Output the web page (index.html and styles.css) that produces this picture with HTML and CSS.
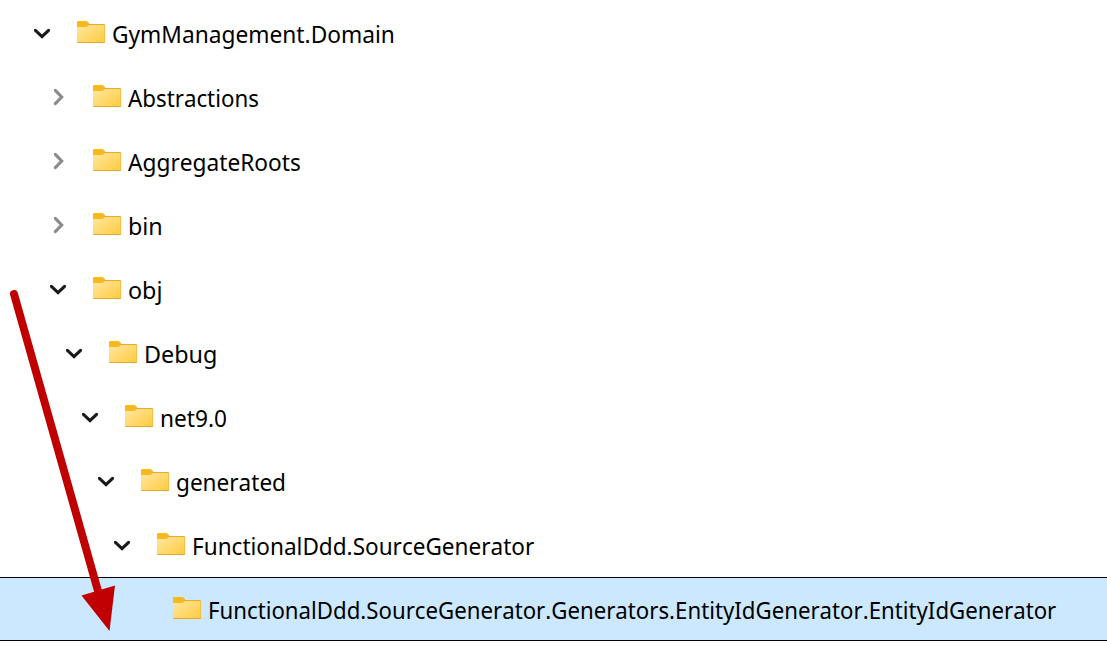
FILE: index.html
```html
<!DOCTYPE html>
<html lang="en"><head><meta charset="utf-8"><title>Folders</title><link rel="stylesheet" href="styles.css"></head>
<body>
<svg width="0" height="0" class="defs"><defs>
<linearGradient id="body" x1="0" y1="0" x2="1" y2="1"><stop offset="0" stop-color="#ffe8a3"/><stop offset="1" stop-color="#ffca3b"/></linearGradient>
<symbol id="folder" viewBox="0 0 30 24"><path d="M1 1Q1 0 2 0H10Q11 0 11.7 .8L13.5 3H28Q29 3 29 4V9H1Z" fill="#f8b81f"/><path d="M1 6H9.5Q11 6 12 5L13.3 4H28.2Q29 4 29 4.8V21.2Q29 22 28.2 22H1.8Q1 22 1 21.2Z" fill="url(#body)"/><path d="M1.3 21.5H28.7" stroke="#e5a92c"/><path d="M13 3.5H28.5" stroke="#e9ad24"/><path d="M28.6 4V21.5" stroke="#efb837" stroke-width=".7"/></symbol>
<symbol id="open" viewBox="0 0 20 20"><path d="M3.4 7.4L10 13.7L16.6 7.4" fill="none" stroke="#191919" stroke-width="3.1" stroke-linecap="round"/></symbol>
<symbol id="closed" viewBox="0 0 20 20"><path d="M7.3 3.4L13.7 10L7.3 16.6" fill="none" stroke="#8b8b8b" stroke-width="3.1" stroke-linecap="round"/></symbol>
</defs></svg>
<main class="tree" id="tree"></main>
<svg class="arrow" width="130" height="650" viewBox="0 0 130 650"><path d="M14 294 L98 591" stroke="#c00000" stroke-width="8" stroke-linecap="round"/><path d="M81.5 595.5 L115 585.5 L109.5 631Z" fill="#c00000"/></svg>
<script src="tree.js"></script>
</body></html>
```
FILE: styles.css
```css
body{margin:0;background:#fff;overflow:hidden;color:#000;font-family:"Noto Sans","Open Sans",sans-serif}
.defs{position:absolute}
.tree{display:flex;flex-direction:column;padding-top:1px}
.row{height:64px;box-sizing:border-box;display:flex;align-items:center;border:solid transparent;border-width:1px 0;padding-left:calc(32px + var(--level)*16px)}
.selected{background:#cce8ff;border-color:#000}
.chevron{width:20px;height:20px;flex:none;margin-right:24px}
.folder{width:30px;height:24px;flex:none;margin-right:6px}
.label{font-size:24px;line-height:32px;white-space:nowrap;padding-top:1px;font-kerning:none;transform-origin:left;transform:scaleX(var(--fit))}
.arrow{position:absolute;left:0;top:0}
```
FILE: tree.js
```js
// Label, depth, state and text width in pixels
const rows=[["GymManagement.Domain",0,"open",283],["Abstractions",1,"closed",131],["AggregateRoots",1,"closed",173],["bin",1,"closed",35],["obj",1,"open",34],["Debug",2,"open",73],["net9.0",3,"open",67],["generated",4,"open",110],["FunctionalDdd.SourceGenerator",5,"open",342],["FunctionalDdd.SourceGenerator.Generators.EntityIdGenerator.EntityIdGenerator",6,"leaf",848]];
const tree=document.getElementById("tree");
tree.innerHTML=rows.map(([t,l,s])=>`<div class="row ${s==="leaf"?"selected":""}" style="--level:${l}"><svg class="chevron">${s==="leaf"?"":`<use href="#${s}"/>`}</svg><svg class="folder"><use href="#folder"/></svg><span class="label">${t}</span></div>`).join("");
tree.querySelectorAll(".label").forEach((el,i)=>el.style.setProperty("--fit",rows[i][3]/el.offsetWidth));
```
